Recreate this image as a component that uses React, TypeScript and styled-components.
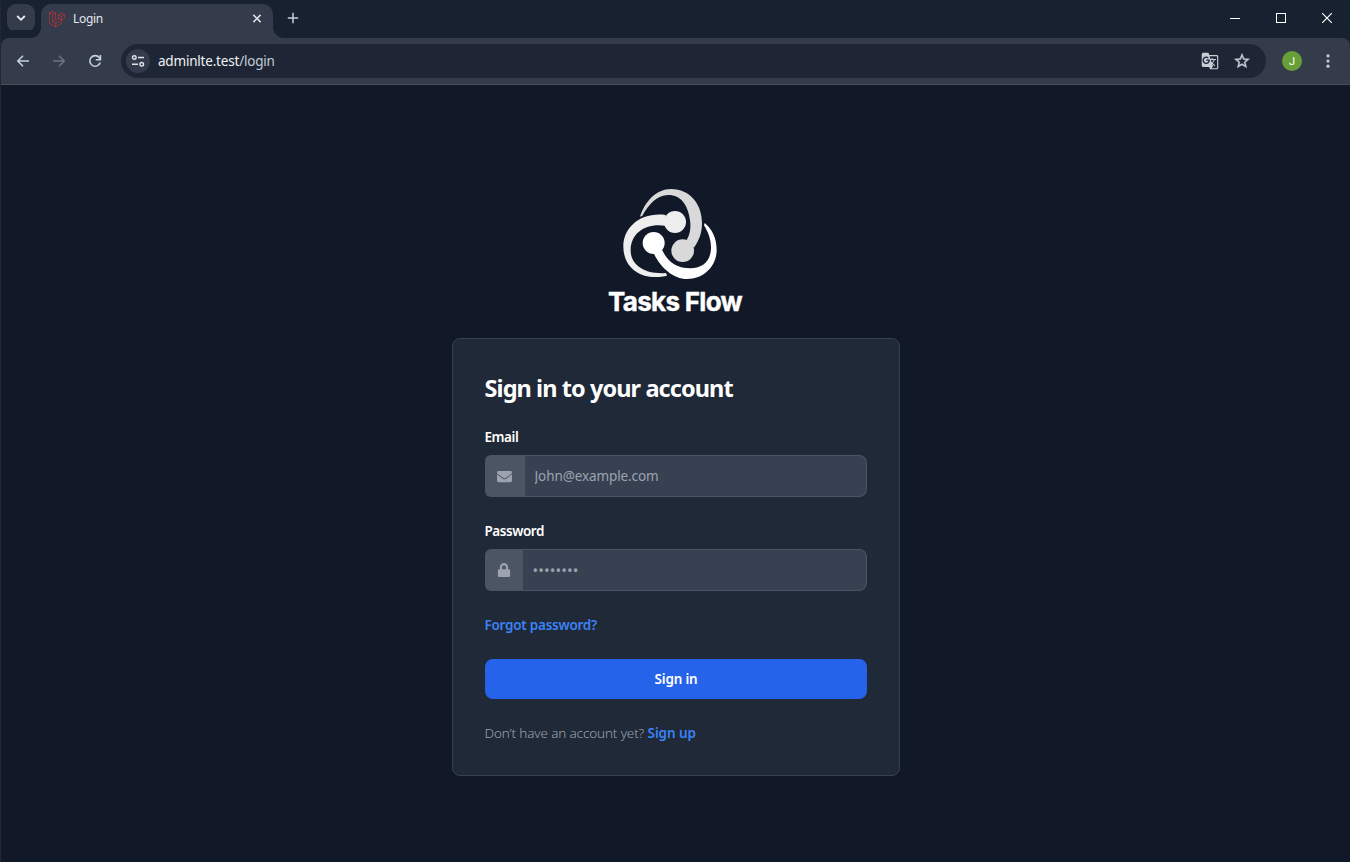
import React from "react";
import styled, { createGlobalStyle } from "styled-components";
import { FaEnvelope, FaLaravel, FaLock } from "react-icons/fa";
import { MdGTranslate, MdStarBorder } from "react-icons/md";

const GlobalStyle = createGlobalStyle`
  *, *::before, *::after { box-sizing: border-box; }
  body { margin: 0; background: #111827; font-family: "Noto Sans", "Open Sans", sans-serif; }
  svg { display: block; }
  button { font-family: inherit; }
`;

const Window = styled.div`
  width: 1350px;
  height: 862px;
  display: flex;
  flex-direction: column;
  overflow: hidden;
  background: #111827;
  border-left: 1px solid #262729;
`;

const TabStrip = styled.div`
  height: 38px;
  flex: none;
  display: flex;
  background: #182130;
`;

const TabSearch = styled.button`
  width: 28px;
  height: 28px;
  margin: 4px 6px 0 6px;
  padding: 0;
  border: 0;
  border-radius: 9px;
  background: #343c4c;
  display: flex;
  align-items: center;
  justify-content: center;
`;

const Tab = styled.div`
  position: relative;
  width: 232px;
  height: 34px;
  margin-top: 4px;
  padding: 0 10px 5px 8px;
  border-radius: 10px 10px 0 0;
  background: #343c4c;
  display: flex;
  align-items: center;

  &::before, &::after {
    content: "";
    position: absolute;
    bottom: 0;
    width: 10px;
    height: 10px;
  }
  &::before { left: -10px; background: radial-gradient(circle at 0 0, transparent 9.5px, #343c4c 10px); }
  &::after { right: -10px; background: radial-gradient(circle at 100% 0, transparent 9.5px, #343c4c 10px); }
`;

const TabTitle = styled.span`
  flex: 1;
  margin-left: 8px;
  color: #e3e6ea;
  font-size: 12px;
  letter-spacing: -0.3px;
  line-height: 16px;
`;

const NewTab = styled.div`
  margin: 12px 0 0 14px;
`;

const Controls = styled.div`
  margin-left: auto;
  display: flex;
  height: 36px;
`;

const Control = styled.div`
  width: 46px;
  display: flex;
  align-items: center;
  justify-content: center;
`;

const Toolbar = styled.div`
  height: 47px;
  flex: none;
  display: flex;
  align-items: center;
  background: #343c4c;
  border-bottom: 1px solid #4b4d52;
  border-radius: 8px 8px 0 0;
  box-shadow: 0 -8px 0 #182130;
`;

const NavButtons = styled.div`
  width: 120px;
  padding-left: 14px;
  display: flex;
  gap: 20px;
`;

const NavIcon = styled.span<{ $dim?: boolean }>`
  width: 16px;
  height: 16px;
  display: flex;
  color: ${(p) => (p.$dim ? "#6c7380" : "#c2d0df")};
`;

const AddressBar = styled.div`
  width: 1145px;
  height: 34px;
  padding: 0 15px 0 5px;
  border-radius: 17px;
  background: #1e2635;
  display: flex;
  align-items: center;
`;

const SiteInfo = styled.span`
  width: 24px;
  height: 24px;
  border-radius: 50%;
  background: #343c4c;
  display: flex;
  align-items: center;
  justify-content: center;
`;

const Url = styled.span`
  flex: 1;
  margin-left: 8px;
  color: #f0f2f5;
  font-size: 13.5px;
  letter-spacing: -0.2px;
  line-height: 18px;
`;

const UrlPath = styled.span`
  color: #c3ccd7;
`;

const AddressActions = styled.div`
  display: flex;
  align-items: center;
  gap: 14px;
  color: #c8ccd4;
`;

const StarIcon = styled(MdStarBorder)`
  path:not([fill="none"]) { stroke: currentColor; stroke-width: 0.6px; }
`;

const Avatar = styled.span`
  width: 20px;
  height: 20px;
  margin-left: 16px;
  border-radius: 50%;
  background: #689f38;
  color: #fff;
  display: flex;
  align-items: center;
  justify-content: center;
  font: 11px Roboto, sans-serif;
`;

const MenuIcon = styled.span`
  margin-left: 24px;
`;

const Page = styled.main`
  flex: 1;
  display: flex;
  flex-direction: column;
  align-items: center;
  padding-top: 100px;
`;

const Brand = styled.div`
  height: 153px;
  width: 160px;
  display: flex;
  flex-direction: column;
  align-items: center;
`;

const MarkBox = styled.div`
  padding-right: 10px;
`;

const BrandName = styled.div`
  margin-top: 5px;
  margin-right: 1px;
  color: #fff;
  font: 700 26px/32px Inter, sans-serif;
  letter-spacing: -0.7px;
  white-space: nowrap;
  -webkit-text-stroke: 0.4px #fff;
`;

const Card = styled.section`
  width: 448px;
  height: 438px;
  margin-left: 1px;
  padding: 32px 32px 32px 31.5px;
  background: #1f2937;
  border: 1px solid #374151;
  border-radius: 8px;
`;

const Title = styled.h1`
  margin: 2px 0 0;
  color: #fff;
  font-size: 23.5px;
  font-weight: 700;
  line-height: 30px;
  letter-spacing: -0.92px;
  white-space: nowrap;
`;

const Form = styled.form`
  margin-top: 24px;
  display: flex;
  flex-direction: column;
  gap: 24px;
`;

const Field = styled.div``;

const Label = styled.label`
  display: block;
  margin-bottom: 8px;
  color: #fff;
  font-size: 13.5px;
  font-weight: 600;
  line-height: 20px;
  letter-spacing: -0.45px;
`;

const InputGroup = styled.div`
  display: flex;
  height: 42px;
  margin-left: 0.5px;
`;

const Addon = styled.span<{ $width: number }>`
  width: ${(p) => p.$width}px;
  flex: none;
  display: flex;
  align-items: center;
  justify-content: center;
  padding-right: 1px;
  border-radius: 6px 0 0 6px;
  background: #4b5563;
  color: #9ca3af;
`;

const Input = styled.input<{ $tracking: number; $size?: number }>`
  flex: 1;
  min-width: 0;
  padding: 0 9.5px;
  border: 1px solid #4b5563;
  border-left: 0;
  border-radius: 0 8px 8px 0;
  outline: 0;
  background: #374151;
  font-family: inherit;
  font-size: ${(p) => p.$size ?? 13.5}px;
  letter-spacing: ${(p) => p.$tracking}px;
  &::placeholder { color: #9ca3af; opacity: 1; }
`;

const Link = styled.a`
  color: #3b82f6;
  font-size: 13.5px;
  font-weight: 600;
  line-height: 20px;
  letter-spacing: -0.25px;
`;

const Submit = styled.button`
  height: 40px;
  margin-left: 0.5px;
  border: 0;
  border-radius: 8px;
  background: #2563eb;
  color: #fff;
  font-size: 13.5px;
  font-weight: 600;
  letter-spacing: -0.2px;
`;

const Hint = styled.p`
  margin: 0;
  color: #9ca3af;
  font-size: 13.5px;
  font-weight: 300;
  line-height: 20px;
  letter-spacing: -0.14px;

  ${Link} { letter-spacing: -0.1px; }
`;

const stroke = { fill: "none", stroke: "currentColor" } as const;

function BrandMark() {
  return (
    <svg width="100" height="96" viewBox="78 15 300 288">
      <g fill="#d9d9d9">
        <path d="M135 110C150 64 184 27 228 27C285 27 321 72 321 130C321 158 313 181 297 203L275 180C286 163 288 142 285 121C279 75 258 45 220 45C185 45 160 75 142 107Z" />
        <circle cx="263" cy="212" r="34" />
      </g>
      <g fill="#eeeeee">
        <path d="M216 287C196 292 167 292 149 287C106 275 85 239 85 200C85 142 136 96 212 105L214 138C153 128 108 158 107 210C106 257 153 284 213 279Z" />
        <circle cx="240" cy="126" r="33" />
      </g>
      <g fill="#ffffff">
        <path d="M176 220C198 264 234 297 276 297C329 297 365 256 365 210C365 176 352 147 329 129L327 136C340 157 349 181 348 207C346 242 324 265 286 265C247 265 218 246 202 211Z" />
        <circle cx="176" cy="189" r="33" />
      </g>
    </svg>
  );
}

function BrowserChrome() {
  return (
    <>
      <TabStrip>
        <TabSearch aria-label="Search tabs">
          <svg width="10" height="8" viewBox="0 0 10 8" color="#e8edf2">
            <path d="M1.2 2L5 5.8L8.8 2" {...stroke} strokeWidth="1.8" />
          </svg>
        </TabSearch>
        <Tab>
          <FaLaravel size={16} color="#f02c2c" />
          <TabTitle>Login</TabTitle>
          <svg width="12" height="12" viewBox="0 0 12 12" color="#e0e4e9">
            <path d="M2.4 1.9L9.6 9.1M9.6 1.9L2.4 9.1" {...stroke} strokeWidth="1.5" />
          </svg>
        </Tab>
        <NewTab>
          <svg width="12" height="12" viewBox="0 0 12 12" color="#c2d0df">
            <path d="M6 .8V11.2M.8 6H11.2" {...stroke} strokeWidth="1.5" />
          </svg>
        </NewTab>
        <Controls>
          <Control>
            <svg width="10" height="11" color="#fff"><path d="M0 5.5H10" {...stroke} /></svg>
          </Control>
          <Control>
            <svg width="10" height="10" color="#fff"><rect x=".5" y=".5" width="9" height="9" {...stroke} /></svg>
          </Control>
          <Control>
            <svg width="10" height="10" color="#fff"><path d="M0 0L10 10M10 0L0 10" {...stroke} strokeWidth="1.2" /></svg>
          </Control>
        </Controls>
      </TabStrip>
      <Toolbar>
        <NavButtons>
          <NavIcon>
            <svg width="16" height="16"><path d="M8 2.8L2.8 8L8 13.2M2.8 8H14" {...stroke} strokeWidth="1.6" /></svg>
          </NavIcon>
          <NavIcon $dim>
            <svg width="16" height="16"><path d="M8 2.8L13.2 8L8 13.2M13.2 8H2" {...stroke} strokeWidth="1.6" /></svg>
          </NavIcon>
          <NavIcon>
            <svg width="16" height="16">
              <path d="M13.2 9.5A5.3 5.3 0 1 1 12.3 4.7L13.4 6.3M13.4 2.1V6.7H8.8" {...stroke} strokeWidth="1.6" />
            </svg>
          </NavIcon>
        </NavButtons>
        <AddressBar>
          <SiteInfo>
            <svg width="14" height="14" viewBox="0 0 14 14" color="#e1e5ea">
              <g {...stroke} strokeWidth="1.4">
                <circle cx="3.3" cy="3.5" r="1.8" />
                <path d="M7 3.5H13M1 10.3H7" />
                <circle cx="10.7" cy="10.3" r="1.8" />
              </g>
            </svg>
          </SiteInfo>
          <Url>adminlte.test<UrlPath>/login</UrlPath></Url>
          <AddressActions>
            <MdGTranslate size={18} />
            <StarIcon size={18} />
          </AddressActions>
        </AddressBar>
        <Avatar>J</Avatar>
        <MenuIcon>
          <svg width="4" height="16" viewBox="0 0 4 16" fill="#c2d0df">
            <circle cx="2" cy="2.8" r="1.6" />
            <circle cx="2" cy="8" r="1.6" />
            <circle cx="2" cy="13.2" r="1.6" />
          </svg>
        </MenuIcon>
      </Toolbar>
    </>
  );
}

export default function App() {
  return (
    <Window>
      <GlobalStyle />
      <BrowserChrome />
      <Page>
        <Brand>
          <MarkBox><BrandMark /></MarkBox>
          <BrandName>Tasks Flow</BrandName>
        </Brand>
        <Card>
          <Title>Sign in to your account</Title>
          <Form>
            <Field>
              <Label htmlFor="email">Email</Label>
              <InputGroup>
                <Addon $width={40}><FaEnvelope size={15} /></Addon>
                <Input id="email" type="email" placeholder="John@example.com" $tracking={-0.1} />
              </InputGroup>
            </Field>
            <Field>
              <Label htmlFor="password">Password</Label>
              <InputGroup>
                <Addon $width={38}><FaLock size={14} /></Addon>
                <Input id="password" type="password" placeholder="••••••••" $tracking={0.1} $size={15} />
              </InputGroup>
            </Field>
            <Link>Forgot password?</Link>
            <Submit type="button">Sign in</Submit>
            <Hint>Don’t have an account yet? <Link>Sign up</Link></Hint>
          </Form>
        </Card>
      </Page>
    </Window>
  );
}
